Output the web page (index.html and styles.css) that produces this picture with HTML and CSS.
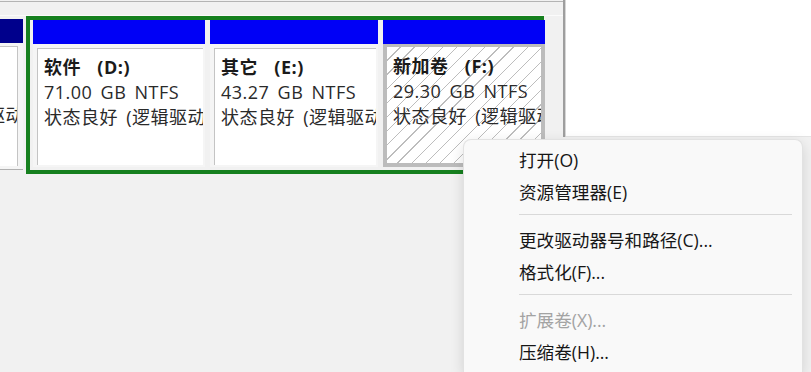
FILE: index.html
```html
<!DOCTYPE html>
<html lang="zh-CN">
<head>
<meta charset="utf-8">
<title>磁盘管理</title>
<link rel="stylesheet" href="styles.css">
</head>
<body>
<div class="screen">
  <div class="top">
    <div class="disk">
      <div class="rule"></div>
      <div class="parts">
        <div class="part p0">
          <div class="hd navy"></div>
          <div class="bd">
            <div class="in clip">
              <div class="ln"></div>
              <div class="ln"></div>
              <div class="ln end"><span>状态良好 (逻辑驱动</span></div>
            </div>
          </div>
        </div>
        <div class="ext">
          <div class="part pd">
            <div class="hd"></div>
            <div class="bd">
              <div class="in">
                <div class="ln name">软件 &nbsp;(D:)</div>
                <div class="ln">71.00 GB NTFS</div>
                <div class="ln">状态良好 (逻辑驱动器)</div>
              </div>
            </div>
          </div>
          <div class="part pe">
            <div class="hd"></div>
            <div class="bd">
              <div class="in">
                <div class="ln name">其它 &nbsp;(E:)</div>
                <div class="ln">43.27 GB NTFS</div>
                <div class="ln">状态良好 (逻辑驱动器)</div>
              </div>
            </div>
          </div>
          <div class="part pf sel">
            <div class="hd"></div>
            <div class="bd">
              <div class="in hatch">
                <div class="ln name">新加卷 &nbsp;(F:)</div>
                <div class="ln">29.30 GB NTFS</div>
                <div class="ln">状态良好 (逻辑驱动器)</div>
              </div>
            </div>
          </div>
        </div>
      </div>
    </div>
    <div class="vline"></div>
    <div class="blank"></div>
  </div>

  <div class="menu">
    <div class="item">打开(O)</div>
    <div class="item">资源管理器(E)</div>
    <div class="sep"></div>
    <div class="item">更改驱动器号和路径(C)...</div>
    <div class="item">格式化(F)...</div>
    <div class="sep"></div>
    <div class="item dis">扩展卷(X)...</div>
    <div class="item">压缩卷(H)...</div>
  </div>
</div>
</body>
</html>
```

FILE: styles.css
```css
html, body {
  margin: 0;
  padding: 0;
}
body {
  width: 811px;
  height: 372px;
  overflow: hidden;
  background: #f1f1f1;
  font-family: "Open Sans", "Noto Sans CJK SC", sans-serif;
  color: #1e1e1e;
}
.screen {
  position: relative;
  width: 811px;
  height: 372px;
  overflow: hidden;
}
.top {
  display: flex;
  align-items: flex-start;
  height: 176px;
}
.disk {
  width: 563px;
  flex: none;
  display: flex;
  flex-direction: column;
}
.rule {
  height: 1px;
  margin-top: 1px;
  background: #b4b4b4;
}
.parts {
  margin-top: 13px;
  border-top: 1px solid #fbfbfb;
  display: flex;
  align-items: flex-start;
}
.part {
  display: flex;
  flex-direction: column;
  height: 147px;
  flex: none;
}
.p0 {
  width: 23px;
  margin-top: 3px;
  height: 151px;
}
.hd {
  height: 24px;
  background: #0000f6;
}
.hd.navy {
  background: #00008c;
}
.bd {
  flex: 1;
  display: flex;
  padding: 4px 2px 2px 4px;
  background: #f5f5f5;
}
.p0 .bd {
  padding: 3px 5px 3px 0;
  border-bottom: 1px solid #b0b0b0;
}
.in {
  flex: 1;
  background: #fff;
  border-top: 1px solid #c4c4c4;
  border-left: 1px solid #c4c4c4;
  padding: 6px 0 0 6px;
  overflow: hidden;
  font-size: 18px;
  line-height: 25px;
}
.in.clip {
  padding-left: 0;
  border-left: none;
  border-right: 1px solid #c4c4c4;
}
.ln {
  white-space: nowrap;
  height: 25px;
  letter-spacing: 0.5px;
  word-spacing: 3px;
  color: #2a2a2a;
}
.ln.end {
  display: flex;
  justify-content: flex-end;
}
.ln.end span {
  margin-right: -7px;
}
.name {
  font-weight: 700;
  color: #1a1a1a;
}
.ext {
  width: 518px;
  margin-left: 3px;
  border: 4px solid #16801f;
  padding: 0 3px 3px;
  display: flex;
  gap: 5px;
  flex: none;
  box-sizing: border-box;
}
.pd { width: 172px; }
.pe { width: 168px; }
.pf { width: 162px; }
.sel .bd {
  background: #bcbcbc;
  padding: 3px 4px 4px 4px;
}
.in.hatch {
  border: none;
  padding-top: 7px;
  padding-left: 6px;
  background: repeating-linear-gradient(135deg, #ffffff 0 9px, #bdbdbd 9px 10px);
}
.vline {
  width: 2px;
  height: 137px;
  background: #9e9e9e;
  border-right: 1px solid #d6d6d6;
  flex: none;
}
.blank {
  flex: 1;
  height: 136px;
  background: #fff;
  border-bottom: 1px solid #e4e4e4;
}
.menu {
  position: absolute;
  left: 463px;
  top: 139px;
  width: 340px;
  height: 233px;
  box-sizing: border-box;
  padding-top: 4px;
  background: #f9f9f9;
  border: 1px solid #e2e2e2;
  border-bottom: none;
  border-radius: 8px 8px 0 0;
  box-shadow: 0 4px 14px rgba(0, 0, 0, 0.13);
  font-size: 17.6px;
}
.item {
  height: 32px;
  line-height: 32px;
  padding-left: 55px;
  white-space: nowrap;
  color: #161616;
}
.item.dis {
  color: #a3a3a3;
}
.sep {
  height: 1px;
  margin: 6px 10px 9px 55px;
  background: #d9d9d9;
}
```
